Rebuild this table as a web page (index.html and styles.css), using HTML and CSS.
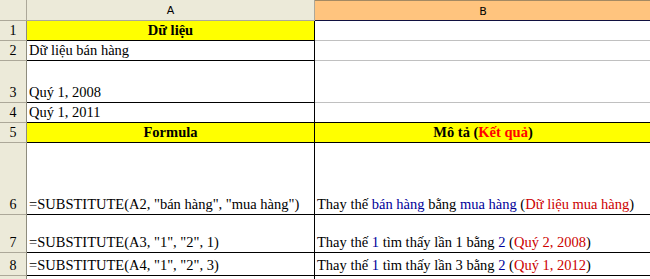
FILE: index.html
```html
<!DOCTYPE html>
<html lang="vi">
<head>
<meta charset="utf-8">
<title>SUBSTITUTE</title>
<link rel="stylesheet" href="styles.css">
</head>
<body>
<div class="sheet">
  <div class="corner"></div>
  <div class="colhead">A</div>
  <div class="colhead sel">B</div>

  <div class="rowhead r1">1</div>
  <div class="cell a yellow bold center">Dữ liệu</div>
  <div class="cell b grid"></div>

  <div class="rowhead r2">2</div>
  <div class="cell a">Dữ liệu bán hàng</div>
  <div class="cell b grid"></div>

  <div class="rowhead r3">3</div>
  <div class="cell a">Quý 1, 2008</div>
  <div class="cell b grid"></div>

  <div class="rowhead r4">4</div>
  <div class="cell a">Quý 1, 2011</div>
  <div class="cell b"></div>

  <div class="rowhead r5">5</div>
  <div class="cell a yellow bold center">Formula</div>
  <div class="cell b yellow bold center">Mô tả (<span class="red">Kết quả</span>)</div>

  <div class="rowhead r6">6</div>
  <div class="cell a">=SUBSTITUTE(A2, "bán hàng", "mua hàng")</div>
  <div class="cell b">Thay thế&nbsp;<span class="blue">bán hàng</span>&nbsp;bằng&nbsp;<span class="blue">mua hàng</span>&nbsp;(<span class="dred">Dữ liệu mua hàng</span>)</div>

  <div class="rowhead r7">7</div>
  <div class="cell a">=SUBSTITUTE(A3, "1", "2", 1)</div>
  <div class="cell b">Thay thế&nbsp;<span class="blue">1</span>&nbsp;tìm thấy lần 1 bằng&nbsp;<span class="blue">2</span>&nbsp;(<span class="dred">Quý 2, 2008</span>)</div>

  <div class="rowhead r8">8</div>
  <div class="cell a">=SUBSTITUTE(A4, "1", "2", 3)</div>
  <div class="cell b">Thay thế&nbsp;<span class="blue">1</span>&nbsp;tìm thấy lần 3 bằng&nbsp;<span class="blue">2</span>&nbsp;(<span class="dred">Quý 1, 2012</span>)</div>

  <div class="rowhead r9"></div>
  <div class="cell a blank"></div>
  <div class="cell b blank"></div>
</div>
</body>
</html>
```

FILE: styles.css
```css
html, body {
  margin: 0;
  padding: 0;
  background: #ffffff;
  overflow: hidden;
}

.sheet {
  display: grid;
  grid-template-columns: 27px 288px 336px;
  grid-template-rows: 21px 20px 20px 42px 20px 20px 72px 38px 23px 10px;
  font-family: "Liberation Serif", "Times New Roman", serif;
  font-size: 14.5px;
  color: #000000;
  width: 651px;
}

.corner,
.colhead,
.rowhead {
  box-sizing: border-box;
  background: #ecead9;
  border-right: 1px solid #aca899;
  border-bottom: 1px solid #aca899;
}

.colhead {
  display: flex;
  align-items: center;
  justify-content: center;
  font-family: "DejaVu Sans", "Liberation Sans", sans-serif;
  font-size: 11px;
  padding-top: 1px;
}

.colhead.sel {
  background: #ffc47e;
  border-top: 1px solid #a48a63;
  border-right: none;
  border-bottom: 1px solid #101040;
}

.rowhead {
  display: flex;
  align-items: flex-end;
  justify-content: center;
  line-height: 17px;
  padding-bottom: 1px;
  font-size: 14px;
  border-right-color: #8e8c7d;
}

.cell {
  box-sizing: border-box;
  display: flex;
  align-items: flex-end;
  white-space: nowrap;
  line-height: 17px;
  padding: 0 0 1px 2px;
  border-bottom: 1px solid #000000;
  overflow: hidden;
}

.cell.a {
  border-right: 1px solid #000000;
}

.cell.b.grid {
  border-bottom-color: #c0c0c0;
}

.cell.blank {
  border-bottom: none;
}

.yellow {
  background: #ffff00;
}

.bold {
  font-weight: bold;
}

.center {
  justify-content: center;
  padding-left: 0;
}

.red {
  color: #ff0000;
}

.dred {
  color: #cc0000;
}

.blue {
  color: #000099;
}
```
